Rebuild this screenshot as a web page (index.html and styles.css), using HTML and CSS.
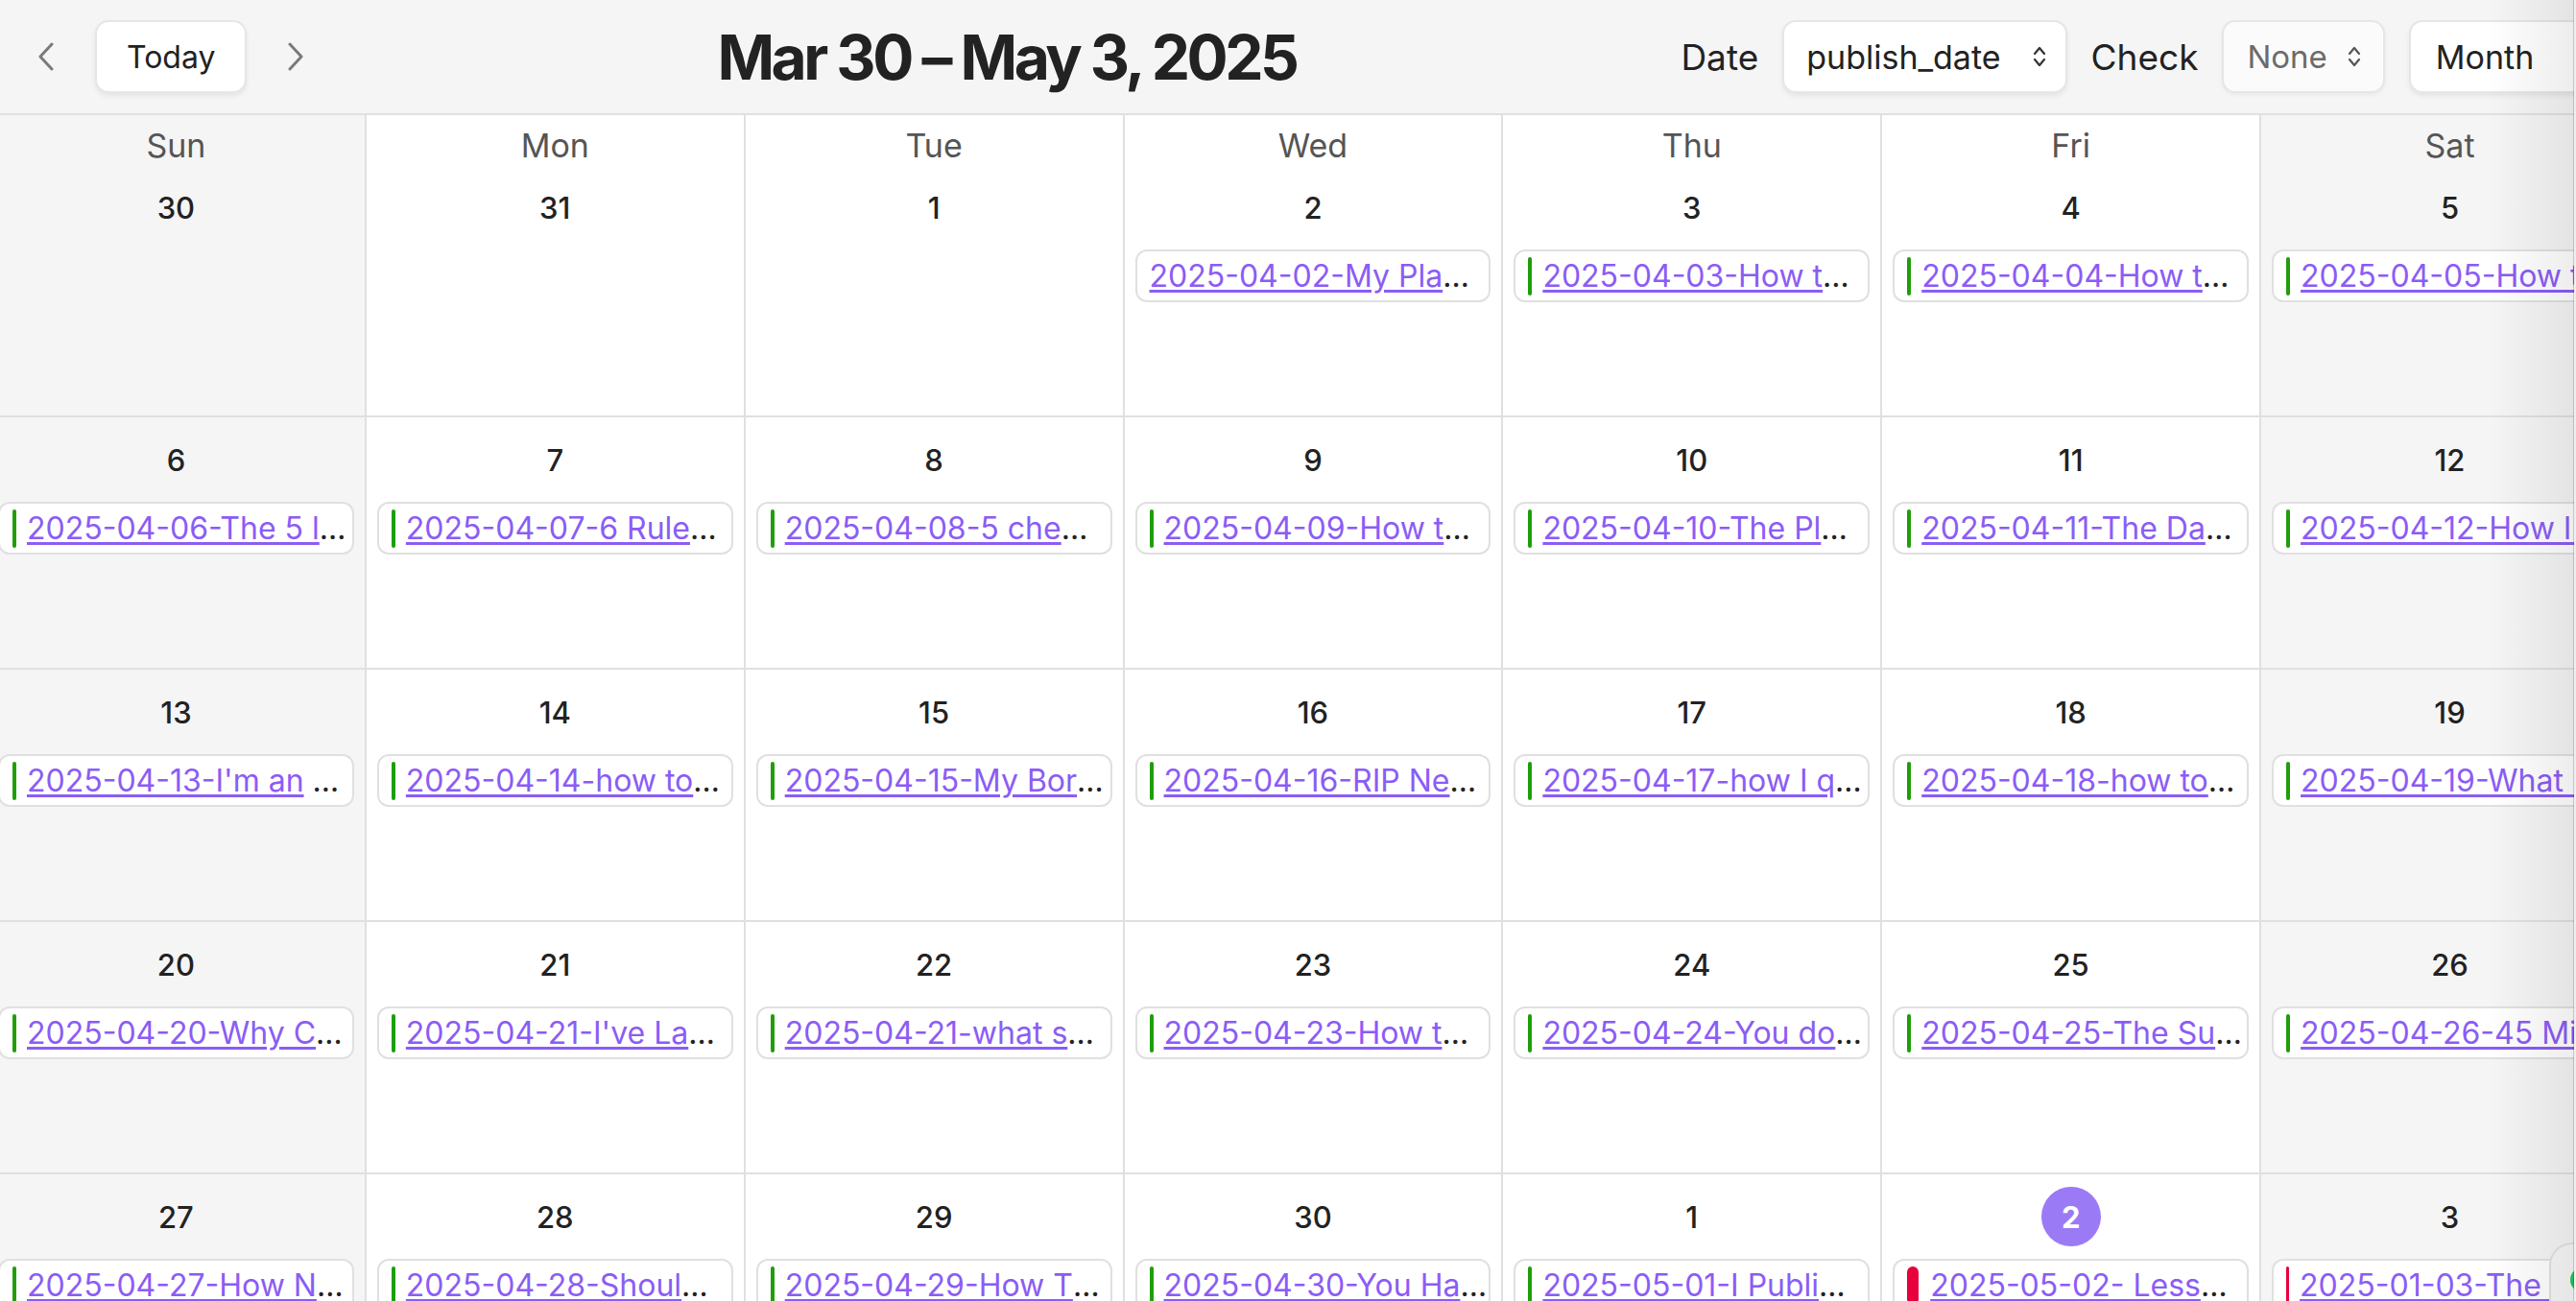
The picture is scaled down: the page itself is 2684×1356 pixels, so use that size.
FILE: index.html
```html
<!DOCTYPE html>
<html lang="en">
<head>
<meta charset="utf-8">
<title>Calendar</title>
<link rel="stylesheet" href="styles.css">
</head>
<body>
<div class="app">
  <header class="toolbar">
    <div class="nav">
      <button class="icon-btn" aria-label="Previous">
        <svg width="18" height="30" viewBox="0 0 18 30"><polyline points="15,2 3,15 15,28" fill="none" stroke="#7a7a7a" stroke-width="3" stroke-linecap="round" stroke-linejoin="round"/></svg>
      </button>
      <button class="btn btn-today">Today</button>
      <button class="icon-btn" aria-label="Next">
        <svg width="18" height="30" viewBox="0 0 18 30"><polyline points="3,2 15,15 3,28" fill="none" stroke="#7a7a7a" stroke-width="3" stroke-linecap="round" stroke-linejoin="round"/></svg>
      </button>
    </div>
    <h1 class="title">Mar 30 – May 3, 2025</h1>
    <div class="controls">
      <span class="label">Date</span>
      <div class="select">
        <span>publish_date</span>
        <svg class="updown" width="16" height="26" viewBox="0 0 16 26"><polyline points="3,10 8,4 13,10" fill="none" stroke="#333" stroke-width="2.2" stroke-linecap="round" stroke-linejoin="round"/><polyline points="3,16 8,22 13,16" fill="none" stroke="#333" stroke-width="2.2" stroke-linecap="round" stroke-linejoin="round"/></svg>
      </div>
      <span class="label">Check</span>
      <div class="select select-muted">
        <span>None</span>
        <svg class="updown" width="16" height="26" viewBox="0 0 16 26"><polyline points="3,10 8,4 13,10" fill="none" stroke="#555" stroke-width="2.2" stroke-linecap="round" stroke-linejoin="round"/><polyline points="3,16 8,22 13,16" fill="none" stroke="#555" stroke-width="2.2" stroke-linecap="round" stroke-linejoin="round"/></svg>
      </div>
      <div class="select select-month">
        <span>Month</span>
        <svg class="updown" width="16" height="26" viewBox="0 0 16 26"><polyline points="3,10 8,4 13,10" fill="none" stroke="#333" stroke-width="2.2" stroke-linecap="round" stroke-linejoin="round"/><polyline points="3,16 8,22 13,16" fill="none" stroke="#333" stroke-width="2.2" stroke-linecap="round" stroke-linejoin="round"/></svg>
      </div>
    </div>
  </header>

  <main class="calendar">
    <div class="week week-first">
      <div class="cell weekend"><div class="dayname">Sun</div><div class="daynum">30</div></div>
      <div class="cell"><div class="dayname">Mon</div><div class="daynum">31</div></div>
      <div class="cell"><div class="dayname">Tue</div><div class="daynum">1</div></div>
      <div class="cell"><div class="dayname">Wed</div><div class="daynum">2</div>
        <div class="event"><a href="#">2025-04-02-My Pla</a>…</div></div>
      <div class="cell"><div class="dayname">Thu</div><div class="daynum">3</div>
        <div class="event"><i class="bar"></i><a href="#">2025-04-03-How t</a>…</div></div>
      <div class="cell"><div class="dayname">Fri</div><div class="daynum">4</div>
        <div class="event"><i class="bar"></i><a href="#">2025-04-04-How t</a>…</div></div>
      <div class="cell weekend"><div class="dayname">Sat</div><div class="daynum">5</div>
        <div class="event"><i class="bar"></i><a href="#">2025-04-05-How to</a>…</div></div>
    </div>

    <div class="week">
      <div class="cell weekend"><div class="daynum">6</div>
        <div class="event"><i class="bar"></i><a href="#">2025-04-06-The 5 l</a>…</div></div>
      <div class="cell"><div class="daynum">7</div>
        <div class="event"><i class="bar"></i><a href="#">2025-04-07-6 Rule</a>…</div></div>
      <div class="cell"><div class="daynum">8</div>
        <div class="event"><i class="bar"></i><a href="#">2025-04-08-5 che</a>…</div></div>
      <div class="cell"><div class="daynum">9</div>
        <div class="event"><i class="bar"></i><a href="#">2025-04-09-How t</a>…</div></div>
      <div class="cell"><div class="daynum">10</div>
        <div class="event"><i class="bar"></i><a href="#">2025-04-10-The Pl</a>…</div></div>
      <div class="cell"><div class="daynum">11</div>
        <div class="event"><i class="bar"></i><a href="#">2025-04-11-The Da</a>…</div></div>
      <div class="cell weekend"><div class="daynum">12</div>
        <div class="event"><i class="bar"></i><a href="#">2025-04-12-How I Plan</a>…</div></div>
    </div>

    <div class="week">
      <div class="cell weekend"><div class="daynum">13</div>
        <div class="event"><i class="bar"></i><a href="#">2025-04-13-I'm an</a>&nbsp;…</div></div>
      <div class="cell"><div class="daynum">14</div>
        <div class="event"><i class="bar"></i><a href="#">2025-04-14-how to</a>…</div></div>
      <div class="cell"><div class="daynum">15</div>
        <div class="event"><i class="bar"></i><a href="#">2025-04-15-My Bor</a>…</div></div>
      <div class="cell"><div class="daynum">16</div>
        <div class="event"><i class="bar"></i><a href="#">2025-04-16-RIP Ne</a>…</div></div>
      <div class="cell"><div class="daynum">17</div>
        <div class="event"><i class="bar"></i><a href="#">2025-04-17-how I q</a>…</div></div>
      <div class="cell"><div class="daynum">18</div>
        <div class="event"><i class="bar"></i><a href="#">2025-04-18-how to</a>…</div></div>
      <div class="cell weekend"><div class="daynum">19</div>
        <div class="event"><i class="bar"></i><a href="#">2025-04-19-What I</a>…</div></div>
    </div>

    <div class="week">
      <div class="cell weekend"><div class="daynum">20</div>
        <div class="event"><i class="bar"></i><a href="#">2025-04-20-Why C</a>…</div></div>
      <div class="cell"><div class="daynum">21</div>
        <div class="event"><i class="bar"></i><a href="#">2025-04-21-I've La</a>…</div></div>
      <div class="cell"><div class="daynum">22</div>
        <div class="event"><i class="bar"></i><a href="#">2025-04-21-what s</a>…</div></div>
      <div class="cell"><div class="daynum">23</div>
        <div class="event"><i class="bar"></i><a href="#">2025-04-23-How t</a>…</div></div>
      <div class="cell"><div class="daynum">24</div>
        <div class="event"><i class="bar"></i><a href="#">2025-04-24-You do</a>…</div></div>
      <div class="cell"><div class="daynum">25</div>
        <div class="event"><i class="bar"></i><a href="#">2025-04-25-The Su</a>…</div></div>
      <div class="cell weekend"><div class="daynum">26</div>
        <div class="event"><i class="bar"></i><a href="#">2025-04-26-45 Minutes</a>…</div></div>
    </div>

    <div class="week">
      <div class="cell weekend"><div class="daynum">27</div>
        <div class="event"><i class="bar"></i><a href="#">2025-04-27-How N</a>…</div></div>
      <div class="cell"><div class="daynum">28</div>
        <div class="event"><i class="bar"></i><a href="#">2025-04-28-Shoul</a>…</div></div>
      <div class="cell"><div class="daynum">29</div>
        <div class="event"><i class="bar"></i><a href="#">2025-04-29-How T</a>…</div></div>
      <div class="cell"><div class="daynum">30</div>
        <div class="event"><i class="bar"></i><a href="#">2025-04-30-You Ha</a>…</div></div>
      <div class="cell"><div class="daynum">1</div>
        <div class="event"><i class="bar"></i><a href="#">2025-05-01-I Publi</a>…</div></div>
      <div class="cell"><div class="daynum"><span class="today">2</span></div>
        <div class="event"><i class="bar bar-thick"></i><a href="#">2025-05-02- Less</a>…</div></div>
      <div class="cell weekend"><div class="daynum">3</div>
        <div class="event"><i class="bar bar-red"></i><a href="#">2025-01-03-The Best</a>…</div></div>
    </div>
  </main>

  <div class="floater"><span class="dot"></span></div>
  <div class="edge-shadow"></div>
</div>
</body>
</html>
```

FILE: styles.css
```css
html, body {
  margin: 0;
  padding: 0;
  overflow: hidden;
  background: #ffffff;
}

body {
  font-family: Inter, "Noto Sans", "Liberation Sans", sans-serif;
  color: #222222;
}

.app {
  position: relative;
  width: 2684px;
  height: 1356px;
  overflow: hidden;
}

/* ---------- toolbar ---------- */
.toolbar {
  display: flex;
  align-items: center;
  height: 118px;
  padding-left: 28px;
  background: #f5f5f5;
  border-bottom: 2px solid #e0e0e0;
  box-sizing: content-box;
}

.nav {
  display: flex;
  flex: none;
  align-items: center;
  gap: 31px;
}

.icon-btn {
  display: flex;
  align-items: center;
  justify-content: center;
  width: 40px;
  height: 76px;
  padding: 0;
  border: 0;
  background: transparent;
}

.btn {
  display: flex;
  align-items: center;
  box-sizing: border-box;
  height: 76px;
  padding: 0 28px;
  font-family: inherit;
  font-size: 32px;
  color: #222222;
  background: #ffffff;
  border: 2px solid #e6e6e6;
  border-radius: 14px;
  box-shadow: 0 3px 5px rgba(0, 0, 0, 0.07);
}

.btn-today {
  padding: 0 31px;
}

.title {
  flex: none;
  width: 1004px;
  margin: 0 0 0 419px;
  font-size: 64px;
  font-weight: 700;
  letter-spacing: -0.055em;
  color: #222222;
  white-space: nowrap;
}

.controls {
  display: flex;
  flex: none;
  align-items: center;
  gap: 25px;
  white-space: nowrap;
}

.label {
  font-size: 37px;
  color: #222222;
}

.select {
  display: flex;
  flex: none;
  align-items: center;
  gap: 32px;
  box-sizing: border-box;
  height: 76px;
  padding: 0 19px 0 23px;
  font-size: 34px;
  color: #222222;
  background: #ffffff;
  border: 2px solid #e6e6e6;
  border-radius: 14px;
  box-shadow: 0 3px 5px rgba(0, 0, 0, 0.07);
}

.select-muted {
  color: #6b6b6b;
  background: #fbfbfb;
  font-size: 33px;
  gap: 20px;
  padding: 0 22px 0 24px;
  box-shadow: 0 2px 4px rgba(0, 0, 0, 0.05);
}

.select-month {
  gap: 52px;
  padding: 0 22px 0 26px;
}

/* ---------- calendar ---------- */
.calendar {
  width: 2764px;
  margin-left: -13px;
}

.week {
  display: grid;
  grid-template-columns: repeat(7, 394.857px);
  height: 263px;
}

.week-first {
  height: 315px;
}

.cell {
  box-sizing: border-box;
  background: #ffffff;
  border-right: 2px solid #e0e0e0;
  border-bottom: 2px solid #e0e0e0;
  overflow: hidden;
}

.cell.weekend {
  background: #f5f5f5;
}

.dayname {
  box-sizing: border-box;
  height: 52px;
  padding-top: 12px;
  line-height: 40px;
  text-align: center;
  font-size: 34px;
  color: #555555;
}

.daynum {
  display: flex;
  align-items: center;
  justify-content: center;
  height: 44px;
  margin-top: 22px;
  font-size: 31px;
  font-weight: 500;
  color: #222222;
}

.today {
  display: flex;
  align-items: center;
  justify-content: center;
  flex: none;
  width: 62px;
  height: 62px;
  border-radius: 50%;
  background: #9b7af6;
  color: #ffffff;
  font-weight: 700;
}

.event {
  display: flex;
  align-items: center;
  box-sizing: border-box;
  height: 55px;
  margin: 22px 11px 0;
  padding: 0 18px 0 13px;
  background: #ffffff;
  border: 2px solid #e0e0e0;
  border-radius: 12px;
  font-size: 32px;
  color: #222222;
  white-space: nowrap;
  overflow: hidden;
}

.event a {
  color: #8b5cf6;
  text-decoration: underline;
  text-decoration-thickness: 3px;
  text-underline-offset: 3px;
}

.bar {
  flex: none;
  width: 4px;
  height: 40px;
  margin-right: 11px;
  border-radius: 2px;
  background: #1f9e0a;
}

.bar-thick {
  width: 12px;
  margin-right: 12px;
  border-radius: 6px;
  background: #e8003d;
}

.bar-red {
  width: 3px;
  background: #e8003d;
}

/* ---------- overlays ---------- */
.floater {
  position: absolute;
  left: 2656px;
  top: 1295px;
  width: 120px;
  height: 120px;
  box-sizing: border-box;
  background: #f7f7f7;
  border: 2px solid #e2e2e2;
  border-radius: 24px;
}

.dot {
  position: absolute;
  left: 20px;
  top: 24px;
  width: 26px;
  height: 26px;
  border-radius: 50%;
  background: #22c55e;
}

.edge-shadow {
  position: absolute;
  top: 0;
  right: 0;
  width: 92px;
  height: 100%;
  pointer-events: none;
  background: linear-gradient(to right,
    rgba(0, 0, 0, 0) 0%,
    rgba(0, 0, 0, 0.07) 97%,
    rgba(0, 0, 0, 0.22) 97%,
    rgba(0, 0, 0, 0.22) 98%,
    #efefef 98%);
}
```
